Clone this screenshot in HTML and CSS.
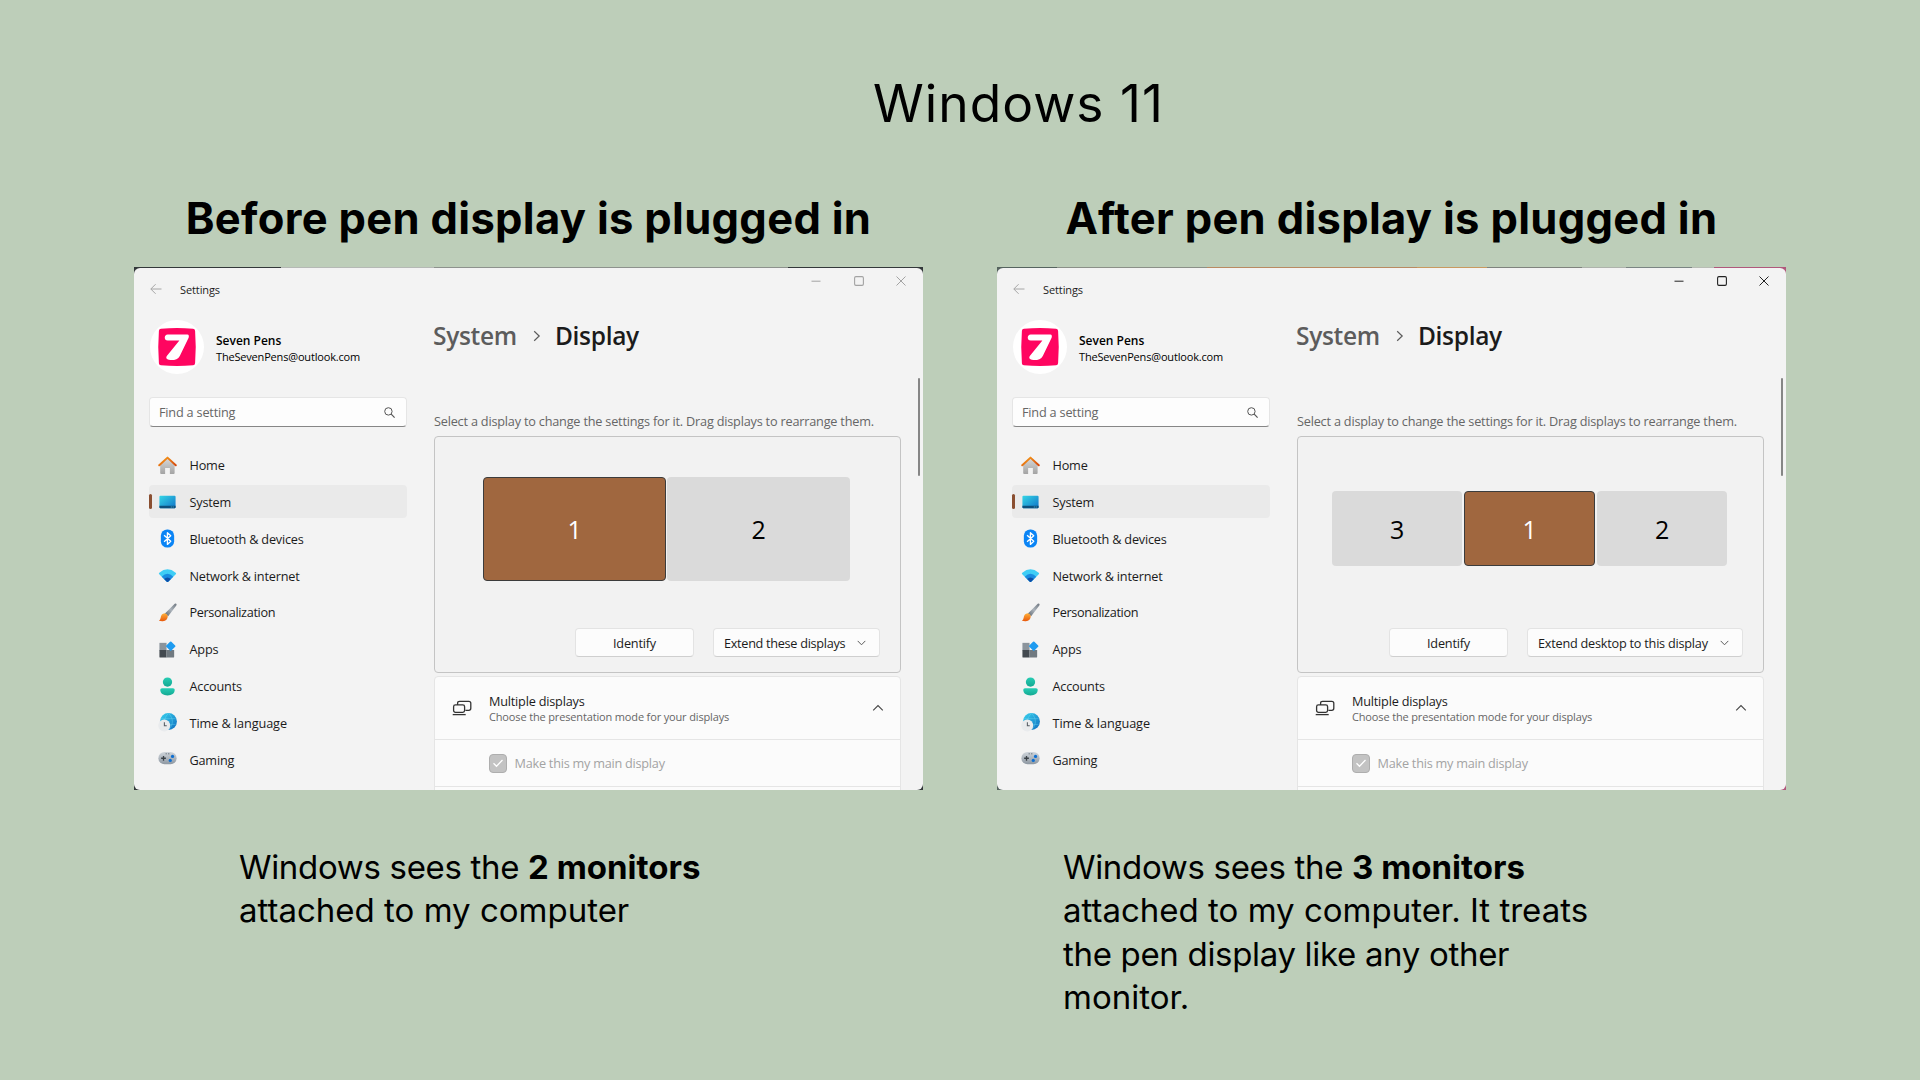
FILE: index.html
```html
<!DOCTYPE html>
<html lang="en">
<head>
<meta charset="utf-8">
<title>Windows 11</title>
<link rel="stylesheet" href="styles.css">
</head>
<body>
<svg class="sprite" aria-hidden="true">
  <defs>
    <linearGradient id="g-roof" x1="0" y1="0" x2="1" y2="1"><stop offset="0" stop-color="#f9a01b"/><stop offset="1" stop-color="#d4480c"/></linearGradient>
    <linearGradient id="g-wall" x1="0" y1="0" x2="0" y2="1"><stop offset="0" stop-color="#d9d9d9"/><stop offset="1" stop-color="#a3a3a3"/></linearGradient>
    <linearGradient id="g-screen" x1="0" y1="0" x2="1" y2="1"><stop offset="0" stop-color="#35d6e6"/><stop offset="1" stop-color="#1173c8"/></linearGradient>
    <linearGradient id="g-handle" x1="1" y1="0" x2="0" y2="1"><stop offset="0" stop-color="#6f7780"/><stop offset=".5" stop-color="#aab2ba"/><stop offset="1" stop-color="#5c646d"/></linearGradient>
    <linearGradient id="g-tip" x1="0" y1="0" x2="0" y2="1"><stop offset="0" stop-color="#ffb03a"/><stop offset="1" stop-color="#e8590c"/></linearGradient>
    <linearGradient id="g-person" x1="0" y1="0" x2="0" y2="1"><stop offset="0" stop-color="#27cdb4"/><stop offset="1" stop-color="#14a892"/></linearGradient>
    <linearGradient id="g-globe" x1="0" y1="0" x2="1" y2="1"><stop offset="0" stop-color="#3ad3ee"/><stop offset="1" stop-color="#0d6cc0"/></linearGradient>
    <linearGradient id="g-pad" x1="0" y1="0" x2="0" y2="1"><stop offset="0" stop-color="#cfd5db"/><stop offset="1" stop-color="#8d97a1"/></linearGradient>
  </defs>
  <symbol id="i-back" viewBox="0 0 12 12"><path d="M11.5 6H.9M5.6 1.2.8 6l4.8 4.8" fill="none" stroke="#a6a6a6"/></symbol>
  <symbol id="i-min" viewBox="0 0 10 10"><path d="M.5 5.2h9" fill="none" stroke="currentColor"/></symbol>
  <symbol id="i-max" viewBox="0 0 10 10"><rect x=".6" y=".6" width="8.8" height="8.8" rx="1.3" fill="none" stroke="currentColor" stroke-width="1.1"/></symbol>
  <symbol id="i-close" viewBox="0 0 10 10"><path d="m.5.5 9 9m0-9-9 9" fill="none" stroke="currentColor"/></symbol>
  <symbol id="i-seven" viewBox="0 0 54 54">
    <circle cx="27" cy="27" r="27" fill="#fff"/>
    <path d="M11 8.7q16-1.300 32 0 1.800.2 2.100 2 1.300 16 0 32.500-.2 2-2 2.100-16 1.300-32.200 0-1.900-.2-2-2.100-1.300-16 0-32.500.2-1.900 2.100-2Z" fill="#ff0560"/>
    <path d="M17.700 14.400h19.600c1.800 0 1.900 2.200 1.200 3.700l-8.700 17.800c-1.500 3-4.800 4.100-8.300 4.100-3.500 0-6.700-1.200-4.500-4.200l12.400-15.300H17.700c-3.900 0-3.900-6.100 0-6.100Z" fill="#fff"/>
  </symbol>
  <symbol id="i-search" viewBox="0 0 11 11"><circle cx="4.400" cy="4.400" r="3.700" fill="none" stroke="#555"/><path d="m7.200 7.200 3.400 3.400" stroke="#555" stroke-width="1.200"/></symbol>
  <symbol id="i-home" viewBox="0 0 20 20">
    <path d="M2.300 8.500 10 2l7.500 6.500V18q0 1-1 1H12.500v-6.500h-5V19H3.300q-1 0-1-1Z" fill="url(#g-wall)"/>
    <path d="M1.300 9.800 10 1.700l8.700 8.100" fill="none" stroke="url(#g-roof)" stroke-width="2.100" stroke-linecap="round" stroke-linejoin="round"/>
  </symbol>
  <symbol id="i-system" viewBox="0 0 20 20"><rect x="1.500" y="4" width="17" height="13" rx="1" fill="url(#g-screen)"/><path d="M1.500 14.600h17V16q0 1-1 1h-15q-1 0-1-1Z" fill="#0d4f7c"/><path d="M13.500 15.800h1m1 0h1" stroke="#5fd0f2" stroke-width=".8"/></symbol>
  <symbol id="i-bluetooth" viewBox="0 0 20 20"><rect x="3" y=".5" width="14" height="19" rx="6.700" fill="#0a84f5"/><path d="m6.400 6.600 7 6.400-3.500 3.200V3.900l3.500 3.200-7 6.400" fill="none" stroke="#fff" stroke-width="1.400" stroke-linejoin="round"/></symbol>
  <symbol id="i-network" viewBox="0 0 20 20"><path d="M1.300 8.600q-.8-.9.100-1.600Q10-.2 18.600 7q.9.700.1 1.600L10.700 16.500q-.7.600-1.400 0Z" fill="#3fcdf5"/><path d="M3.900 11.200Q10 4.900 16.100 11.200L10.700 16.500q-.7.600-1.400 0Z" fill="#1a8ce0"/><path d="M6.500 13.700q3.500-3.400 7 0l-2.800 2.800q-.7.600-1.400 0Z" fill="#0c4fa8"/></symbol>
  <symbol id="i-brush" viewBox="0 0 20 20"><path d="M19.200.8q.8.700.1 1.700L10.700 14 7.300 11l10.300-10.100q.8-.8 1.600-.1Z" fill="url(#g-handle)"/><path d="M7 10.900q3 .4 3.300 3.100-.2 4.800-5.200 5.100-2.500.1-4.100-.5 1.600-.8 1.800-3.100.5-4.100 4.200-4.600Z" fill="url(#g-tip)"/></symbol>
  <symbol id="i-apps" viewBox="0 0 20 20"><path d="M1.500 3h7.500v8H1.500Z" fill="#8b949c"/><path d="M1.500 10.500h7.500V18.500h-6.500q-1 0-1-1Z" fill="#43494f"/><path d="M9 10.500h8V17.500q0 1-1 1H9Z" fill="#707980"/><rect x="9.600" y="2.700" width="7.600" height="7.600" rx="1" transform="rotate(45 13.400 6.500)" fill="#1e9bf0"/></symbol>
  <symbol id="i-person" viewBox="0 0 20 20"><circle cx="10" cy="5.300" r="4.900" fill="url(#g-person)"/><path d="M4.200 11.800h11.600q1.800 0 1.800 1.700c0 3.800-3.200 6-7.600 6s-7.600-2.200-7.600-6q0-1.700 1.800-1.700Z" fill="url(#g-person)"/></symbol>
  <symbol id="i-time" viewBox="0 0 20 20"><circle cx="11" cy="9" r="8.900" fill="url(#g-globe)"/><path d="M3.300 6h15.400M3.500 12h15M11 .6C5.500 5 5.500 13 11 17.400 16.500 13 16.500 5 11 .6" fill="none" stroke="#7ae4f5" stroke-width=".6" opacity=".6"/><circle cx="6.600" cy="13.200" r="6.300" fill="#e9ebed"/><path d="M6.700 9.800v3.700h2.500" fill="none" stroke="#555c63" stroke-width="1.100"/></symbol>
  <symbol id="i-gaming" viewBox="0 0 20 20"><rect x=".4" y="2.200" width="19.200" height="12.800" rx="6.400" fill="url(#g-pad)"/><path d="M3.300 8.700h5M5.800 6.200v5" stroke="#3b4248" stroke-width="1.400"/><path d="M8 4h1.300m1.300 0H12" stroke="#5b646c" stroke-width=".9"/><circle cx="15.300" cy="6.800" r="1.700" fill="#0f6fd1"/><circle cx="12.900" cy="11" r="1.700" fill="#0f6fd1"/></symbol>
  <symbol id="i-right" viewBox="0 0 8 12"><path d="m1.200 1.200 5 4.800-5 4.800" fill="none" stroke="#5c5c5c" stroke-width="1.200"/></symbol>
  <symbol id="i-down" viewBox="0 0 9 6"><path d="M.7.900 4.500 4.800 8.300.900" fill="none" stroke="#5c5c5c"/></symbol>
  <symbol id="i-up" viewBox="0 0 12 8"><path d="M1.200 6.300 6 1.600l4.800 4.700" fill="none" stroke="#444" stroke-width="1.100"/></symbol>
  <symbol id="i-displays" viewBox="0 0 20 16"><path d="M5.600 5V3.300q0-2 2-2h9.200q2 0 2 2v5q0 2-2 2h-3.400" fill="none" stroke="#333" stroke-width="1.300"/><rect x="1.600" y="4.900" width="11" height="7.500" rx="1.800" fill="none" stroke="#333" stroke-width="1.300"/><path d="M.7 14.600h13" stroke="#333" stroke-width="1.300"/></symbol>
  <symbol id="i-check" viewBox="0 0 12 10"><path d="m1.500 5.200 3 3 6-6.200" fill="none" stroke="#fff" stroke-width="1.300"/></symbol>
</svg>

<main class="slide">
  <h1 class="title">Windows 11</h1>
  <div class="columns">
    <section class="column">
      <h2 class="heading">Before pen display is plugged in</h2>
      <div class="shot shot-before">
        <div class="window">
          <header class="titlebar">
            <svg class="back"><use href="#i-back"/></svg>
            <span class="app-name">Settings</span>
            <div class="controls inactive">
              <svg><use href="#i-min"/></svg><svg><use href="#i-max"/></svg><svg><use href="#i-close"/></svg>
            </div>
          </header>
          <div class="body">
            <aside class="sidebar">
              <div class="profile">
                <svg class="avatar"><use href="#i-seven"/></svg>
                <div class="who"><b class="name">Seven Pens</b><span class="email">TheSevenPens@outlook.com</span></div>
              </div>
              <div class="search"><span>Find a setting</span><svg><use href="#i-search"/></svg></div>
              <nav class="nav">
                <a class="item"><svg><use href="#i-home"/></svg>Home</a>
                <a class="item selected"><svg><use href="#i-system"/></svg>System</a>
                <a class="item"><svg><use href="#i-bluetooth"/></svg>Bluetooth &amp; devices</a>
                <a class="item"><svg><use href="#i-network"/></svg>Network &amp; internet</a>
                <a class="item"><svg><use href="#i-brush"/></svg><span class="tight">Personalization</span></a>
                <a class="item"><svg><use href="#i-apps"/></svg>Apps</a>
                <a class="item"><svg><use href="#i-person"/></svg>Accounts</a>
                <a class="item"><svg><use href="#i-time"/></svg><span class="loose">Time &amp; language</span></a>
                <a class="item"><svg><use href="#i-gaming"/></svg>Gaming</a>
              </nav>
            </aside>
            <div class="content">
              <div class="crumbs"><span class="parent">System</span><svg><use href="#i-right"/></svg><span>Display</span></div>
              <p class="hint">Select a display to change the settings for it. Drag displays to rearrange them.</p>
              <div class="panel">
                <div class="monitors two">
                  <div class="monitor active">1</div>
                  <div class="monitor">2</div>
                </div>
                <div class="actions">
                  <div class="button">Identify</div>
                  <div class="button select">Extend these displays<svg><use href="#i-down"/></svg></div>
                </div>
              </div>
              <div class="card">
                <div class="card-head">
                  <svg class="card-icon"><use href="#i-displays"/></svg>
                  <div class="card-text"><span class="card-title">Multiple displays</span><span class="card-sub">Choose the presentation mode for your displays</span></div>
                  <svg class="up"><use href="#i-up"/></svg>
                </div>
                <div class="card-row"><span class="check"><svg><use href="#i-check"/></svg></span>Make this my main display</div>
              </div>
            </div>
            <div class="scroll"></div>
          </div>
        </div>
      </div>
      <p class="caption caption-before"><span class="lead">Windows sees the </span><b>2 monitors</b><br>attached to my computer</p>
    </section>

    <section class="column">
      <h2 class="heading">After pen display is plugged in</h2>
      <div class="shot shot-after">
        <div class="window">
          <header class="titlebar">
            <svg class="back"><use href="#i-back"/></svg>
            <span class="app-name">Settings</span>
            <div class="controls">
              <svg><use href="#i-min"/></svg><svg><use href="#i-max"/></svg><svg><use href="#i-close"/></svg>
            </div>
          </header>
          <div class="body">
            <aside class="sidebar">
              <div class="profile">
                <svg class="avatar"><use href="#i-seven"/></svg>
                <div class="who"><b class="name">Seven Pens</b><span class="email">TheSevenPens@outlook.com</span></div>
              </div>
              <div class="search"><span>Find a setting</span><svg><use href="#i-search"/></svg></div>
              <nav class="nav">
                <a class="item"><svg><use href="#i-home"/></svg>Home</a>
                <a class="item selected"><svg><use href="#i-system"/></svg>System</a>
                <a class="item"><svg><use href="#i-bluetooth"/></svg>Bluetooth &amp; devices</a>
                <a class="item"><svg><use href="#i-network"/></svg>Network &amp; internet</a>
                <a class="item"><svg><use href="#i-brush"/></svg><span class="tight">Personalization</span></a>
                <a class="item"><svg><use href="#i-apps"/></svg>Apps</a>
                <a class="item"><svg><use href="#i-person"/></svg>Accounts</a>
                <a class="item"><svg><use href="#i-time"/></svg><span class="loose">Time &amp; language</span></a>
                <a class="item"><svg><use href="#i-gaming"/></svg>Gaming</a>
              </nav>
            </aside>
            <div class="content">
              <div class="crumbs"><span class="parent">System</span><svg><use href="#i-right"/></svg><span>Display</span></div>
              <p class="hint">Select a display to change the settings for it. Drag displays to rearrange them.</p>
              <div class="panel">
                <div class="monitors three">
                  <div class="monitor">3</div>
                  <div class="monitor active">1</div>
                  <div class="monitor">2</div>
                </div>
                <div class="actions">
                  <div class="button">Identify</div>
                  <div class="button select wide">Extend desktop to this display<svg><use href="#i-down"/></svg></div>
                </div>
              </div>
              <div class="card">
                <div class="card-head">
                  <svg class="card-icon"><use href="#i-displays"/></svg>
                  <div class="card-text"><span class="card-title">Multiple displays</span><span class="card-sub">Choose the presentation mode for your displays</span></div>
                  <svg class="up"><use href="#i-up"/></svg>
                </div>
                <div class="card-row"><span class="check"><svg><use href="#i-check"/></svg></span>Make this my main display</div>
              </div>
            </div>
            <div class="scroll"></div>
          </div>
        </div>
      </div>
      <p class="caption caption-after"><span class="lead">Windows sees the </span><b>3 monitors</b><br>attached to my computer. It treats<br><span class="lead">the pen display like any other</span><br>monitor.</p>
    </section>
  </div>
</main>
</body>
</html>
```
FILE: styles.css
```css
* { box-sizing: border-box; margin: 0; padding: 0; }

body {
  width: 1920px;
  height: 1080px;
  overflow: hidden;
  background: #bdceb9;
  color: #000;
  font-family: "Inter", sans-serif;
}

svg { display: block; flex: none; }
.sprite { position: absolute; width: 0; height: 0; }

.slide { display: flex; flex-direction: column; padding-top: 73px; }

.title {
  height: 60px;
  padding-left: 117px;
  font-size: 51.5px;
  font-weight: 400;
  line-height: 60px;
  letter-spacing: 1px;
  text-align: center;
}

.columns { display: flex; gap: 74px; padding: 59px 0 0 134px; }
.column { width: 789px; }

.heading {
  height: 52px;
  font-size: 43.5px;
  font-weight: 700;
  line-height: 52px;
  letter-spacing: .32px;
  text-align: center;
  white-space: nowrap;
}

.shot { height: 523px; margin-top: 23px; padding-top: 1px; }
.shot-before {
  background: linear-gradient(90deg, #33383a 0 147px, #b5b9b5 147px 300px, #8d928d 300px 654px, #33383a 654px);
}
.shot-after {
  background: linear-gradient(90deg, #56645f 0 60px, #8b9088 60px 210px, #b98a62 210px 420px, #c99a60 420px 490px, #7f837e 490px 585px, #aeb3ac 585px 629px, #7b8583 629px 695px, #b8bdb5 695px 717px, #b0587c 717px);
}

.window {
  display: flex;
  flex-direction: column;
  height: 522px;
  overflow: hidden;
  border-radius: 6px;
  background: #f3f3f3;
  color: #1b1b1b;
  font-family: "Open Sans", sans-serif;
  font-size: 12.7px;
  letter-spacing: -.2px;
  white-space: nowrap;
}

.titlebar { display: flex; align-items: center; height: 42px; padding-left: 16px; }
.back { width: 12px; height: 12px; }
.app-name { margin-left: 18px; font-size: 11px; letter-spacing: -.1px; }
.controls { display: flex; align-self: flex-start; gap: 32.500px; margin: 8px 17px 0 auto; color: #222; }
.controls svg { width: 10px; height: 10px; }
.controls.inactive { color: #a3a3a3; }

.body { display: flex; height: 480px; }

.sidebar { width: 300px; padding: 10px 27px 0 15px; }
.profile { display: flex; align-items: center; height: 54px; }
.avatar { width: 54px; height: 54px; margin-left: 1px; }
.who { display: flex; flex-direction: column; padding: 2px 0 0 12px; color: #000; }
.name { font-size: 12px; font-weight: 600; line-height: 16px; letter-spacing: 0; }
.email { font-size: 11px; line-height: 15px; letter-spacing: -.18px; }

.search {
  display: flex;
  align-items: center;
  justify-content: space-between;
  width: 258px;
  height: 30px;
  margin-top: 23px;
  padding: 0 11px 0 9px;
  border: 1px solid #e5e5e5;
  border-bottom-color: #868686;
  border-radius: 4px;
  background: #fdfdfd;
  color: #666;
}
.search svg { width: 11px; height: 11px; }

.nav { display: flex; flex-direction: column; gap: 3.85px; padding-top: 21.500px; }
.item {
  display: flex;
  align-items: center;
  gap: 12.500px;
  height: 33px;
  padding-left: 9px;
  border-radius: 4px;
}
.item svg { width: 19px; height: 19px; }
.item.selected { padding-left: 0; background: #eaeaea; }
.item.selected::before {
  content: "";
  width: 3px;
  height: 15px;
  margin-right: -6.500px;
  border-radius: 2px;
  background: #8a4f31;
}
.tight { letter-spacing: -.36px; }
.loose { letter-spacing: -.08px; }

.content { width: 467px; padding-top: 9px; }
.crumbs {
  display: flex;
  align-items: center;
  height: 34px;
  margin-left: -1px;
  font-size: 24.5px;
  font-weight: 600;
  line-height: 34px;
  letter-spacing: -.3px;
}
.crumbs svg { width: 8px; height: 12px; margin: 0 14px 0 16px; }
.parent { color: #5c5c5c; }
.hint { height: 18px; margin-top: 59px; color: #666; line-height: 18px; }

.panel {
  height: 237px;
  margin-top: 6px;
  border: 1px solid #c4c4c4;
  border-radius: 4px;
  background: #f2f2f2;
}
.monitors { display: flex; align-items: center; justify-content: center; height: 183px; padding-right: 2px; }
.monitor {
  display: flex;
  align-items: center;
  justify-content: center;
  border-radius: 4px;
  background: #dadada;
  color: #000;
  font-size: 25px;
}
.active { border: 1px solid #3c3c3c; background: #a0673f; color: #fff; }
.two { gap: 1px; }
.two .monitor { width: 183px; height: 104px; }
.three { gap: 2px; }
.three .monitor { width: 130.500px; height: 75px; }

.actions { display: flex; justify-content: flex-end; gap: 19px; padding: 8px 20px 0 0; }
.button {
  display: flex;
  align-items: center;
  justify-content: center;
  width: 119px;
  height: 29px;
  border: 1px solid #e3e3e3;
  border-bottom-color: #cfcfcf;
  border-radius: 4px;
  background: #fcfcfc;
}
.select { justify-content: space-between; width: 167px; padding: 0 13px 0 10px; letter-spacing: -.3px; }
.select.wide { width: 216px; letter-spacing: -.23px; }
.select svg { width: 9px; height: 6px; }

.card { height: 120px; margin-top: 3px; border: 1px solid #e5e5e5; border-radius: 4px 4px 0 0; background: #fbfbfb; }
.card-head { display: flex; align-items: center; height: 63px; padding: 0 16px 0 17px; border-bottom: 1px solid #e5e5e5; }
.card-icon { width: 20px; height: 16px; }
.card-text { display: flex; flex-direction: column; flex: 1; padding: 1px 0 0 17px; }
.card-title { line-height: 17px; }
.card-sub { color: #666; font-size: 11px; line-height: 14px; letter-spacing: -.15px; }
.up { width: 12px; height: 8px; }
.card-row {
  display: flex;
  align-items: center;
  gap: 7.500px;
  height: 47px;
  padding-left: 54px;
  border-bottom: 1px solid #e5e5e5;
  color: #a3a3a3;
  letter-spacing: -.24px;
}
.check {
  display: flex;
  align-items: center;
  justify-content: center;
  width: 18px;
  height: 19px;
  border: 1px solid #aeaeae;
  border-radius: 4px;
  background: #c3c3c3;
}
.check svg { width: 12px; height: 10px; }

.scroll { width: 2px; height: 98px; margin: 68px 0 0 17px; border-radius: 1px; background: #868686; }

.caption { padding-top: 56px; font-size: 33px; line-height: 43.4px; letter-spacing: 0; white-space: nowrap; }
.caption .lead { letter-spacing: -.32px; }
.caption-before { padding-left: 105px; }
.caption-after { padding-left: 66px; }
```
